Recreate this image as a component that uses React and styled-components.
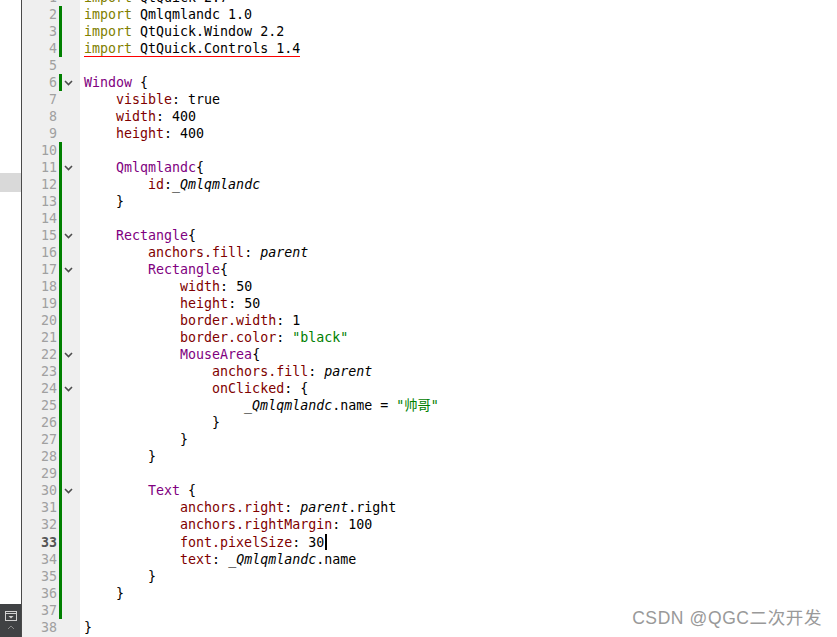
import React from "react";
import styled, { createGlobalStyle } from "styled-components";

const GlobalStyle = createGlobalStyle`
  html, body {
    margin: 0;
    padding: 0;
    background: #ffffff;
    overflow: hidden;
  }
`;

// 토큰 색상 (Qt Creator 기본 테마)
const tokenColors = {
  kw: "#808000",
  type: "#800080",
  prop: "#800000",
  num: "#000000",
  str: "#008000",
  it: "#000000",
  p: "#000000",
};

const code = [
  [["kw", "import"], ["p", " QtQuick 2.7"]],
  [["kw", "import"], ["p", " Qmlqmlandc 1.0"]],
  [["kw", "import"], ["p", " QtQuick.Window 2.2"]],
  [["kw", "import"], ["p", " QtQuick.Controls 1.4"]],
  [],
  [["type", "Window"], ["p", " {"]],
  [["p", "    "], ["prop", "visible"], ["p", ": true"]],
  [["p", "    "], ["prop", "width"], ["p", ": "], ["num", "400"]],
  [["p", "    "], ["prop", "height"], ["p", ": "], ["num", "400"]],
  [],
  [["p", "    "], ["type", "Qmlqmlandc"], ["p", "{"]],
  [["p", "        "], ["prop", "id"], ["p", ":"], ["it", "_Qmlqmlandc"]],
  [["p", "    }"]],
  [],
  [["p", "    "], ["type", "Rectangle"], ["p", "{"]],
  [["p", "        "], ["prop", "anchors.fill"], ["p", ": "], ["it", "parent"]],
  [["p", "        "], ["type", "Rectangle"], ["p", "{"]],
  [["p", "            "], ["prop", "width"], ["p", ": "], ["num", "50"]],
  [["p", "            "], ["prop", "height"], ["p", ": "], ["num", "50"]],
  [["p", "            "], ["prop", "border.width"], ["p", ": "], ["num", "1"]],
  [["p", "            "], ["prop", "border.color"], ["p", ": "], ["str", '"black"']],
  [["p", "            "], ["type", "MouseArea"], ["p", "{"]],
  [["p", "                "], ["prop", "anchors.fill"], ["p", ": "], ["it", "parent"]],
  [["p", "                "], ["prop", "onClicked"], ["p", ": {"]],
  [["p", "                    "], ["it", "_Qmlqmlandc"], ["p", ".name = "], ["str", '"帅哥"']],
  [["p", "                }"]],
  [["p", "            }"]],
  [["p", "        }"]],
  [],
  [["p", "        "], ["type", "Text"], ["p", " {"]],
  [["p", "            "], ["prop", "anchors.right"], ["p", ": "], ["it", "parent"], ["p", ".right"]],
  [["p", "            "], ["prop", "anchors.rightMargin"], ["p", ": "], ["num", "100"]],
  [["p", "            "], ["prop", "font.pixelSize"], ["p", ": "], ["num", "30"]],
  [["p", "            "], ["prop", "text"], ["p", ": "], ["it", "_Qmlqmlandc"], ["p", ".name"]],
  [["p", "        }"]],
  [["p", "    }"]],
  [],
  [["p", "}"]],
];

// 변경된 줄 (초록 막대)
const changedLines = [2, 3, 4, 6, 10, 11, 12, 13, 14, 15, 16, 17, 18, 19, 20, 21, 22, 23, 24, 25, 26, 27, 28, 29, 30, 31, 32, 33, 34, 35, 36, 37];
// 접기 화살표가 있는 줄
const foldLines = [6, 11, 15, 17, 22, 24, 30];
const currentLine = 33;
const underlinedLine = 4;

const Shell = styled.div`
  position: relative;
  display: flex;
  height: 637px;
  width: 837px;
  overflow: hidden;
  font-family: "DejaVu Sans Mono", "Liberation Mono", "Noto Sans CJK SC", monospace;
`;

const SideStrip = styled.div`
  width: 21px;
  display: flex;
  flex-direction: column;
  background: #ffffff;
  border-right: 1px solid #4a4a4a;
`;

const StripSpacer = styled.div`
  height: ${(p) => p.h}px;
  flex: ${(p) => (p.grow ? 1 : "none")};
`;

const StripHighlight = styled.div`
  height: 19px;
  background: #d9d9d9;
`;

const StripToolbar = styled.div`
  height: 33px;
  background: #404244;
  display: flex;
  flex-direction: column;
  align-items: center;
  padding-top: 6px;
  box-sizing: border-box;
  gap: 3px;
`;

const Editor = styled.div`
  flex: 1;
  display: flex;
  overflow: hidden;
`;

const Gutter = styled.div`
  width: 58px;
  background: #efefef;
`;

const Scroller = styled.div`
  margin-top: -11px;
`;

const GutterRow = styled.div`
  height: 17.03px;
  display: grid;
  grid-template-columns: 35px 2px 3px 18px;
  align-items: center;
`;

const LineNo = styled.span`
  text-align: right;
  font-size: 13.3px;
  color: ${(p) => (p.current ? "#555555" : "#a0a0a0")};
  font-weight: ${(p) => (p.current ? "bold" : "normal")};
  line-height: 17px;
`;

const ChangeBar = styled.span`
  grid-column: 3;
  height: 17.03px;
  background: ${(p) => (p.on ? "#008000" : "transparent")};
`;

const FoldCell = styled.span`
  display: flex;
  align-items: center;
  padding-left: 2px;
  height: 17px;
`;

const CodeArea = styled.div`
  flex: 1;
  background: #ffffff;
  padding-left: 4px;
`;

const CodeLine = styled.div`
  height: 17.03px;
  line-height: 17px;
  font-size: 13.3px;
  white-space: pre;
`;

const Content = styled.span`
  ${(p) => (p.underline ? "border-bottom: 1px solid #ff0000; padding-bottom: 0px;" : "")}
`;

const Token = styled.span`
  color: ${(p) => tokenColors[p.kind]};
  font-style: ${(p) => (p.kind === "it" ? "italic" : "normal")};
`;

const Cursor = styled.span`
  display: inline-block;
  width: 2px;
  height: 16px;
  margin-left: 1px;
  background: #000000;
  vertical-align: -3px;
`;

const Watermark = styled.div`
  position: absolute;
  right: 15px;
  bottom: 8px;
  font-family: "Liberation Sans", "Noto Sans CJK SC", sans-serif;
  font-size: 17.5px;
  color: #999999;
  text-shadow: 0 0 1px #ffffff;
  letter-spacing: 0.6px;
`;

function FoldArrow() {
  return (
    <svg width="9" height="6" viewBox="0 0 9 6">
      <polyline points="1,1 4.5,4.5 8,1" fill="none" stroke="#4d4d4d" strokeWidth="1.6" />
    </svg>
  );
}

function PanelIcon() {
  return (
    <svg width="14" height="12" viewBox="0 0 14 12">
      <rect x="1.5" y="1.5" width="11" height="9" fill="none" stroke="#d0d0d0" strokeWidth="1" />
      <line x1="2" y1="3.5" x2="12" y2="3.5" stroke="#d0d0d0" strokeWidth="1" />
      <polygon points="4.5,6 9.5,6 7,8.5" fill="#d0d0d0" />
    </svg>
  );
}

function UpIcon() {
  return (
    <svg width="8" height="5" viewBox="0 0 8 5">
      <polyline points="1,4 4,1 7,4" fill="none" stroke="#8a8a8a" strokeWidth="1" />
    </svg>
  );
}

function App() {
  return (
    <>
      <GlobalStyle />
      <Shell>
        <SideStrip>
          <StripSpacer h={173} />
          <StripHighlight />
          <StripSpacer grow />
          <StripToolbar>
            <PanelIcon />
            <UpIcon />
          </StripToolbar>
        </SideStrip>
        <Editor>
          <Gutter>
            <Scroller>
              {code.map((_, i) => {
                const n = i + 1;
                return (
                  <GutterRow key={n}>
                    <LineNo current={n === currentLine}>{n}</LineNo>
                    <ChangeBar on={changedLines.includes(n)} />
                    <FoldCell>{foldLines.includes(n) && <FoldArrow />}</FoldCell>
                  </GutterRow>
                );
              })}
            </Scroller>
          </Gutter>
          <CodeArea>
            <Scroller>
              {code.map((tokens, i) => {
                const n = i + 1;
                return (
                  <CodeLine key={n}>
                    <Content underline={n === underlinedLine}>
                      {tokens.map(([kind, text], j) => (
                        <Token key={j} kind={kind}>
                          {text}
                        </Token>
                      ))}
                    </Content>
                    {n === currentLine && <Cursor />}
                    {tokens.length === 0 && " "}
                  </CodeLine>
                );
              })}
            </Scroller>
          </CodeArea>
        </Editor>
        <Watermark>CSDN @QGC二次开发</Watermark>
      </Shell>
    </>
  );
}

export default App;
